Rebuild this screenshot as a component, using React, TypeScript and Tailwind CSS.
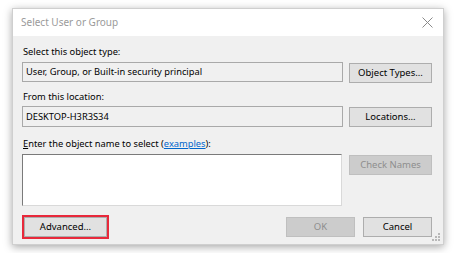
import React from "react";

const font = { fontFamily: '"Noto Sans", "Open Sans", sans-serif' };

function Btn({ children, disabled, w }: { children: React.ReactNode; disabled?: boolean; w: string }) {
  return (
    <div
      className={
        "flex items-center justify-center h-[20px] text-[9.5px] border " +
        w +
        " " +
        (disabled
          ? "bg-[#cccccc] border-[#bfbfbf] text-[#8e8e8e]"
          : "bg-[#e1e1e1] border-[#adadad] text-black")
      }
    >
      {children}
    </div>
  );
}

export default function App() {
  return (
    <div className="w-[457px] h-[253px] bg-white pt-[8px] pl-[12px] overflow-hidden" style={font}>
      <div className="w-[432px] h-[237px] flex flex-col border border-[#cfcfcf] shadow-[0_2px_8px_rgba(0,0,0,0.35)] relative">
        <div className="h-[27px] bg-white flex items-center justify-between pl-[8px] pr-[10px] shrink-0">
          <span className="text-[10px] text-[#9a9a9a]">Select User or Group</span>
          <svg width="11" height="11" viewBox="0 0 11 11">
            <path d="M0.5 0.5 L10.5 10.5 M10.5 0.5 L0.5 10.5" stroke="#8a8a8a" strokeWidth="1" />
          </svg>
        </div>
        <div className="flex-1 bg-[#f0f0f0] pl-[9px] pr-[11px] flex flex-col text-[9.3px] text-black">
          <div className="mt-[9px] h-[14px] leading-[14px] pl-[1px]">Select this object type:</div>
          <div className="mt-[3px] flex gap-[6px]">
            <div className="w-[321px] h-[20px] border border-[#a9a9a9] bg-[#f0f0f0] flex items-center pl-[3px]">
              User, Group, or Built-in security principal
            </div>
            <div className="mt-[1px]">
              <Btn w="w-[83px]">Object Types...</Btn>
            </div>
          </div>
          <div className="mt-[7px] h-[14px] leading-[14px] pl-[1px]">From this location:</div>
          <div className="mt-[2px] flex gap-[6px]">
            <div className="w-[321px] h-[21px] border border-[#a9a9a9] bg-[#f0f0f0] flex items-center pl-[3px]">
              DESKTOP-H3R3S34
            </div>
            <div className="mt-[1px]">
              <Btn w="w-[83px]">Locations...</Btn>
            </div>
          </div>
          <div className="mt-[10px] h-[14px] leading-[14px] pl-[1px]">
            <span className="underline">E</span>nter the object name to select (
            <span className="text-[#0066cc] underline">examples</span>):
          </div>
          <div className="mt-[3px] flex gap-[7px]">
            <div className="w-[320px] h-[52px] bg-white border border-[#d9d9d9] border-t-[#7a7a7a] border-l-[#7a7a7a]"></div>
            <div className="mt-[1px]">
              <Btn w="w-[83px]" disabled>
                Check Names
              </Btn>
            </div>
          </div>
          <div className="mt-[9px] flex items-start">
            <div className="w-[87px] h-[24px] border-2 border-[#e8293b]">
              <div className="h-full bg-[#e1e1e1] border border-[#adadad] flex items-center justify-center text-[9.5px]">
                Advanced...
              </div>
            </div>
            <div className="ml-auto mt-[2px] flex gap-[8px]">
              <Btn w="w-[69px]" disabled>
                OK
              </Btn>
              <Btn w="w-[69px]">Cancel</Btn>
            </div>
          </div>
        </div>
        <svg className="absolute right-[2px] bottom-[2px]" width="10" height="10" viewBox="0 0 10 10">
          <g fill="#b8b8b8">
            <rect x="7" y="1" width="2" height="2" />
            <rect x="4" y="4" width="2" height="2" />
            <rect x="7" y="4" width="2" height="2" />
            <rect x="1" y="7" width="2" height="2" />
            <rect x="4" y="7" width="2" height="2" />
            <rect x="7" y="7" width="2" height="2" />
          </g>
        </svg>
      </div>
    </div>
  );
}
